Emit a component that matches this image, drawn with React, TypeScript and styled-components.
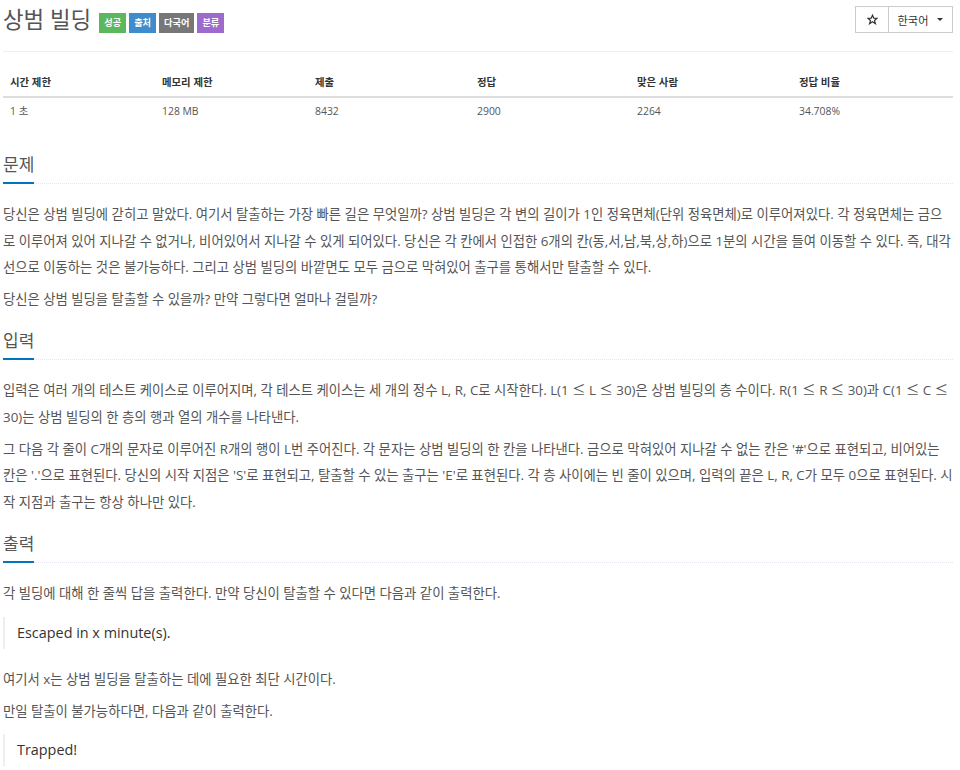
import React from 'react';
import styled, { createGlobalStyle } from 'styled-components';

const GlobalStyle = createGlobalStyle`
    body {
        margin: 0;
        background: #fff;
        font-family: 'Open Sans', 'Noto Sans CJK KR', sans-serif;
        color: #555;
    }
`;

const Page = styled.div`
    width: 950px;
    padding: 0 7px 0 3px;
`;

const Header = styled.div`
    display: flex;
    align-items: center;
    justify-content: space-between;
    height: 52px;
    padding-bottom: 12px;
    box-sizing: border-box;
    border-bottom: 1px solid #eee;
`;

const TitleWrap = styled.div`
    display: flex;
    align-items: center;
    gap: 8px;
`;

const Title = styled.h1`
    margin: 0;
    font-size: 22.4px;
    font-weight: 400;
    line-height: 30px;
    color: #555;
`;

const Badges = styled.div`
    display: flex;
    gap: 3px;
    padding-top: 7px;
`;

const Badge = styled.span<{ $color: string }>`
    display: inline-block;
    height: 20px;
    line-height: 20px;
    padding: 0 5px;
    font-size: 9.2px;
    font-weight: 700;
    color: #fff;
    background: ${(p) => p.$color};
`;

const BtnGroup = styled.div`
    display: flex;
`;

const Btn = styled.button<{ $w: number }>`
    display: flex;
    align-items: center;
    justify-content: center;
    gap: 9px;
    width: ${(p) => p.$w}px;
    height: 27px;
    padding: 0;
    border: 1px solid #ccc;
    background: #fff;
    color: #333;
    font-family: inherit;
    font-size: 11.2px;
    & + & {
        margin-left: -1px;
    }
`;

const Caret = styled.span`
    width: 0;
    height: 0;
    border-left: 3.5px solid transparent;
    border-right: 3.5px solid transparent;
    border-top: 3.5px solid #333;
`;

const Table = styled.table`
    width: 950px;
    margin: 17px 0 28px;
    border-collapse: collapse;
    table-layout: fixed;
    font-size: 10.4px;
`;

const Col = styled.col<{ $w: number }>`
    width: ${(p) => p.$w}px;
`;

const Th = styled.th`
    padding: 6px 7px;
    line-height: 15px;
    text-align: left;
    color: #333;
    font-weight: 700;
    border-bottom: 2px solid #ddd;
`;

const Td = styled.td`
    padding: 6px 7px;
    line-height: 15px;
    color: #555;
`;

const Section = styled.section`
    margin-top: 17px;
`;

const Headline = styled.div`
    display: flex;
    border-bottom: 1px dotted #e4e8ee;
    margin-bottom: 17px;
`;

const H2 = styled.h2`
    margin: 0 0 -1px;
    padding-bottom: 5px;
    font-size: 17px;
    font-weight: 400;
    line-height: 24px;
    color: #555;
    border-bottom: 2px solid #0076c0;
`;

const Text = styled.p`
    margin: 0 0 5px;
    font-size: 13.35px;
    line-height: 26.6px;
    word-break: break-all;
    color: #555;
`;

const Sym = styled.span`
    font-family: 'Noto Sans CJK KR', sans-serif;
`;

const Quote = styled.blockquote`
    margin: 10px 0 17px;
    padding: 6px 12px;
    border-left: 2px solid #eee;
    font-size: 14.4px;
    line-height: 20px;
    color: #333;
`;

const StarIcon = () => (
    <svg width='11' height='11' viewBox='0 0 24 24' fill='none' stroke='#333' strokeWidth='2.6' strokeLinejoin='miter'>
        <polygon points='12,2.5 14.8,9.2 22,9.4 16.4,14 18.4,21.2 12,17 5.6,21.2 7.6,14 2,9.4 9.2,9.2' />
    </svg>
);

const labels = [
    { text: '성공', color: '#5cb85c' },
    { text: '출처', color: '#3f8ccb' },
    { text: '다국어', color: '#777' },
    { text: '분류', color: '#9d6acd' },
];

const stats = [
    { head: '시간 제한', value: '1 초', w: 152 },
    { head: '메모리 제한', value: '128 MB', w: 153 },
    { head: '제출', value: '8432', w: 162 },
    { head: '정답', value: '2900', w: 160 },
    { head: '맞은 사람', value: '2264', w: 162 },
    { head: '정답 비율', value: '34.708%', w: 161 },
];

const le = <Sym>≤</Sym>;

export default function App() {
    return (
        <>
            <GlobalStyle />
            <Page>
                <Header>
                    <TitleWrap>
                        <Title>상범 빌딩</Title>
                        <Badges>
                            {labels.map((l) => (
                                <Badge key={l.text} $color={l.color}>
                                    {l.text}
                                </Badge>
                            ))}
                        </Badges>
                    </TitleWrap>
                    <BtnGroup>
                        <Btn $w={34}>
                            <StarIcon />
                        </Btn>
                        <Btn $w={65}>
                            한국어 <Caret />
                        </Btn>
                    </BtnGroup>
                </Header>

                <Table>
                    <colgroup>
                        {stats.map((s) => (
                            <Col key={s.head} $w={s.w} />
                        ))}
                    </colgroup>
                    <thead>
                        <tr>
                            {stats.map((s) => (
                                <Th key={s.head}>{s.head}</Th>
                            ))}
                        </tr>
                    </thead>
                    <tbody>
                        <tr>
                            {stats.map((s) => (
                                <Td key={s.head}>{s.value}</Td>
                            ))}
                        </tr>
                    </tbody>
                </Table>

                <Section>
                    <Headline>
                        <H2>문제</H2>
                    </Headline>
                    <Text>
                        당신은 상범 빌딩에 갇히고 말았다. 여기서 탈출하는 가장 빠른 길은 무엇일까? 상범 빌딩은 각 변의 길이가 1인
                        정육면체(단위 정육면체)로 이루어져있다. 각 정육면체는 금으로 이루어져 있어 지나갈 수 없거나, 비어있어서 지나갈 수
                        있게 되어있다. 당신은 각 칸에서 인접한 6개의 칸(동,서,남,북,상,하)으로 1분의 시간을 들여 이동할 수 있다. 즉,
                        대각선으로 이동하는 것은 불가능하다. 그리고 상범 빌딩의 바깥면도 모두 금으로 막혀있어 출구를 통해서만 탈출할 수
                        있다.
                    </Text>
                    <Text>당신은 상범 빌딩을 탈출할 수 있을까? 만약 그렇다면 얼마나 걸릴까?</Text>
                </Section>

                <Section>
                    <Headline>
                        <H2>입력</H2>
                    </Headline>
                    <Text>
                        입력은 여러 개의 테스트 케이스로 이루어지며, 각 테스트 케이스는 세 개의 정수 L, R, C로 시작한다. L(1 {le} L {le}{' '}
                        30)은 상범 빌딩의 층 수이다. R(1 {le} R {le} 30)과 C(1 {le} C {le} 30)는 상범 빌딩의 한 층의 행과 열의 개수를
                        나타낸다.
                    </Text>
                    <Text>
                        그 다음 각 줄이 C개의 문자로 이루어진 R개의 행이 L번 주어진다. 각 문자는 상범 빌딩의 한 칸을 나타낸다. 금으로
                        막혀있어 지나갈 수 없는 칸은 '#'으로 표현되고, 비어있는 칸은 '.'으로 표현된다. 당신의 시작 지점은 'S'로
                        표현되고, 탈출할 수 있는 출구는 'E'로 표현된다. 각 층 사이에는 빈 줄이 있으며, 입력의 끝은 L, R, C가 모두
                        0으로 표현된다. 시작 지점과 출구는 항상 하나만 있다.
                    </Text>
                </Section>

                <Section>
                    <Headline>
                        <H2>출력</H2>
                    </Headline>
                    <Text>각 빌딩에 대해 한 줄씩 답을 출력한다. 만약 당신이 탈출할 수 있다면 다음과 같이 출력한다.</Text>
                    <Quote>Escaped in x minute(s).</Quote>
                    <Text>여기서 x는 상범 빌딩을 탈출하는 데에 필요한 최단 시간이다.</Text>
                    <Text>만일 탈출이 불가능하다면, 다음과 같이 출력한다.</Text>
                    <Quote>Trapped!</Quote>
                </Section>
            </Page>
        </>
    );
}
